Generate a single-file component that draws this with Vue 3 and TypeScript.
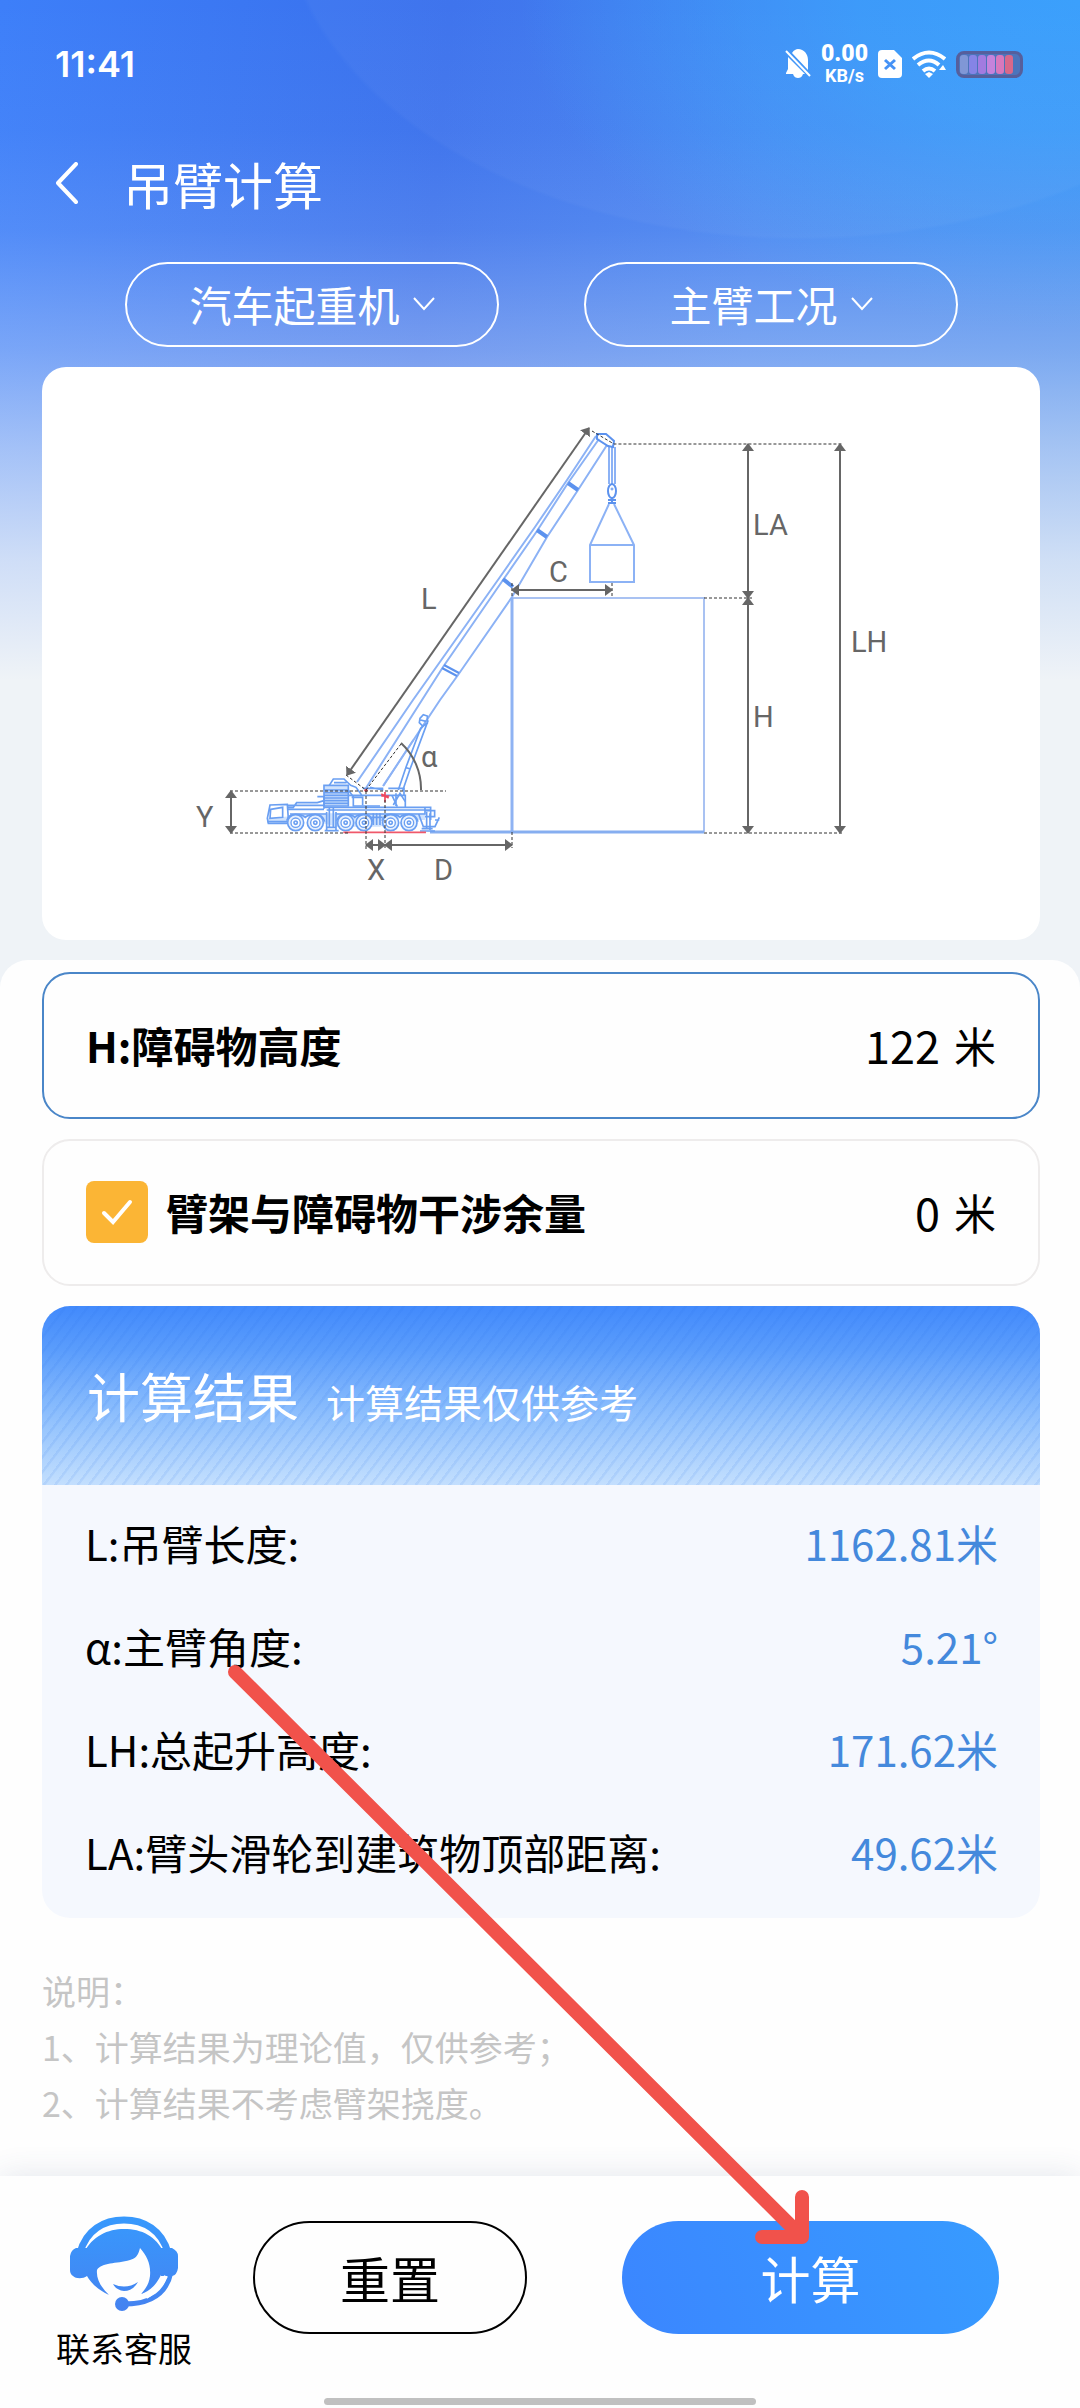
<script setup lang="ts">
import { ref } from 'vue'

interface ResultRow {
  label: string
  value: string
}

const craneTypes: string[] = ['汽车起重机']
const workModes: string[] = ['主臂工况']
const craneType = ref(craneTypes[0])
const workMode = ref(workModes[0])

const obstacleHeight = ref('122')
const clearance = ref('0')
const useClearance = ref(true)

const results: ResultRow[] = [
  { label: 'L:吊臂长度:', value: '1162.81米' },
  { label: 'α:主臂角度:', value: '5.21°' },
  { label: 'LH:总起升高度:', value: '171.62米' },
  { label: 'LA:臂头滑轮到建筑物顶部距离:', value: '49.62米' },
]

const batteryCells: string[] = ['#8097d6', '#8584e6', '#a27be0', '#c583dc', '#d878bd', '#d9688a']
const wheels: number[] = [347, 406, 497, 552, 632, 687]
</script>

<template>
  <div class="page">
    <header class="status">
      <span class="clock">11:41</span>
      <div class="status-icons">
        <svg width="26" height="30" viewBox="0 0 26 30">
          <path d="M7 4 C9 1 11 0 13 0 C19 0 23 5 23 11 V21 Z M3 8 V20 L1 24 V25 H20 Z M8 25 H18 C17 28 15 29 13 29 C11 29 9 28 8 25Z" fill="#fff" />
          <path d="M1 2 L25 27" stroke="#fff" stroke-width="2" />
        </svg>
        <div class="speed"><b>0.00</b><span>KB/s</span></div>
        <svg width="24" height="28" viewBox="0 0 24 28">
          <path d="M4 0 H16 L24 8 V24 Q24 28 20 28 H4 Q0 28 0 24 V4 Q0 0 4 0Z" fill="#fff" />
          <path d="M7 10 L17 19 M17 10 L7 19" stroke="#4592f6" stroke-width="3" />
        </svg>
        <svg width="34" height="28" viewBox="0 0 34 28" fill="none" stroke="#fff" stroke-width="4">
          <path d="M1 9 Q17 -4 33 9" />
          <path d="M6 15 Q17 6 27 15" />
          <path d="M11 21 Q17 16 23 21" />
          <path d="M13 24 L17 22 L21 24 L17 28Z" fill="#fff" stroke="none" />
          <path d="M27 20 L31 15 L34 20Z" fill="#fff" stroke="none" />
        </svg>
        <div class="battery">
          <i v-for="c in batteryCells" :key="c" :style="{ background: c }"></i>
        </div>
      </div>
    </header>

    <div class="titlebar">
      <button class="back" type="button" aria-label="返回">
        <svg width="22" height="42" viewBox="0 0 22 42" fill="none" stroke="#fff" stroke-width="4" stroke-linecap="round" stroke-linejoin="round">
          <path d="M20 2 L2 21 L20 40" />
        </svg>
      </button>
      <h1>吊臂计算</h1>
    </div>

    <div class="filters">
      <label class="pill">
        <select v-model="craneType" aria-label="起重机类型">
          <option v-for="t in craneTypes" :key="t">{{ t }}</option>
        </select>
        <svg width="22" height="14" viewBox="0 0 22 14" fill="none" stroke="#fff" stroke-width="2"><path d="M1 1 L11 12 L21 1" /></svg>
      </label>
      <label class="pill">
        <select v-model="workMode" aria-label="工况">
          <option v-for="m in workModes" :key="m">{{ m }}</option>
        </select>
        <svg width="22" height="14" viewBox="0 0 22 14" fill="none" stroke="#fff" stroke-width="2"><path d="M1 1 L11 12 L21 1" /></svg>
      </label>
    </div>

    <section class="diagram">
      <svg viewBox="42 367 998 573" fill="none">
        <defs>
          <marker id="arrow" viewBox="0 0 8 12" refX="7" refY="6" markerWidth="8" markerHeight="12" markerUnits="userSpaceOnUse" orient="auto-start-reverse">
            <path d="M0 0 L8 6 L0 12Z" fill="#666" />
          </marker>
        </defs>

        <!-- obstacle and ground line -->
        <g stroke="#a9c2f2" stroke-width="2">
          <path d="M512 598 H704 V832" />
          <path d="M512 598 V832" stroke="#8fb3f3" stroke-width="3" />
          <path d="M430 832 H704" stroke="#86aef0" stroke-width="3" />
        </g>

        <!-- boom -->
        <g stroke="#8cb2f5" stroke-width="2">
          <path d="M357 782 L413 700 L500 577 L535 527 L567 480 L596 436" />
          <path d="M366 788 L422 700 L443 667 L503 580 L537 531 L568 483 L599 439" />
          <path d="M383 786 L440 700 L458 675 L512 597 L547 537 L578 490 L607 445" />
          <path d="M609 447 V484 M612 447 V484 M615 447 V484" />
          <path d="M609 504 L590 545 V582 H634 V545 L614 504 M590 545 H634" />
        </g>
        <g stroke="#5c92ee">
          <path d="M503 579 L513 587 M537 530 L547 537 M568 483 L578 490" stroke-width="4" />
          <path d="M444 665 L459 673 M442 668 L457 676" stroke-width="2" />
          <path d="M597 434 H606 L614 441 L613 447 L608 446 L597 439Z" stroke-width="2" />
          <ellipse cx="612" cy="491" rx="4" ry="7" stroke-width="2" />
          <path d="M608 500 H616 M608 503 H616 M612 498 V504" stroke-width="2" />
          <circle cx="612" cy="489" r="1" stroke-width="1" />
        </g>

        <!-- truck body -->
        <g transform="translate(180 680) scale(.3333)" stroke="#6a9ff2" stroke-width="5">
          <path d="M264 425 V415 L432 400 H735 V420 H714 L680 405 L600 440 H470 L430 430 L400 405 L330 430Z" fill="#cfe2fc" stroke="none" />
          <path d="M432 316 H505 V378 H432Z" fill="#cfe2fc" stroke="none" />
          <path d="M262 415 L270 375 L322 373 L326 430 H265Z M272 388 L308 382 V412 L270 415Z" />
          <path d="M322 382 H340 L350 368 H412 L432 362 M322 376 H432 M412 350 H432 V386 M322 388 H432 M330 402 H440 M262 425 H322" />
          <path d="M432 316 H505 V378 H432Z M432 330 H505 M432 338 H505 M432 346 H505 M432 354 H505 M432 362 H505 M432 370 H505" />
          <path d="M448 316 L460 297 H492 L512 316 L528 322 L545 345 M462 308 H500 M505 330 L520 350 V378 H600" />
          <path d="M505 346 H676 V382 M515 352 H548 V376 M548 325 H610 M570 322 L610 330 M625 325 H672 V346" />
          <path d="M432 382 H752 V420 M440 390 H752 M468 402 H735 V382 M735 392 H764 V410 H735 M716 402 L730 440 H765 L778 412 M765 420 H778" />
          <path d="M448 382 V440 M460 382 V440 M440 396 V450 M468 396 V450 M438 442 H470 M434 452 H476 M740 395 V445 M750 400 V450 M725 446 H758 M720 453 H765" />
          <path d="M580 400 V435 M590 400 V435 M600 400 V435 M574 412 H608" />
          <path d="M320 422 Q325 403 347 403 Q366 403 376 412 Q386 403 406 403 Q428 403 434 425 M470 422 Q476 403 497 403 Q516 403 524 412 Q534 403 552 403 Q574 403 578 425 M606 422 Q612 403 632 403 Q652 403 660 412 Q668 403 687 403 Q708 403 714 425" />
          <g v-for="x in wheels" :key="x">
            <circle :cx="x" cy="428" r="24" fill="#e6f0fe" />
            <circle :cx="x" cy="428" r="14" fill="#fff" stroke-width="4" />
            <circle :cx="x" cy="428" r="5" />
          </g>
          <path d="M640 375 L660 340 L676 365 M636 346 L652 380 M648 340 V378" />
          <path d="M655 330 L678 262 L722 145 L742 128 L690 268 L668 332 M676 262 L692 268 M720 115 L730 104 L742 108 V130 L728 138 L718 128Z M722 120 L738 124" />
          <path d="M610 318 L700 180" stroke="#8cb2f5" />
          <path d="M490 457 H738" stroke="#f0586a" />
          <path d="M604 348 H628 M615 336 V366 M604 342 L626 354" stroke="#f0455a" stroke-width="5" />
          <circle cx="558" cy="331" r="5" fill="#f0455a" stroke="none" />
        </g>

        <!-- guide lines -->
        <g stroke="#333" stroke-width="1" stroke-dasharray="3 2">
          <path d="M592 431 L614 444 H842" />
          <path d="M704 598 H753 M704 833 H842" />
          <path d="M512 583 V598 M612 583 V598" />
          <path d="M230 791 H446 M230 833 H350" />
          <path d="M366 791 V850 M385 800 V850 M512 832 V848" />
          <path d="M346 775 L366 790 L401 744" />
        </g>

        <!-- dimensions -->
        <g stroke="#666" stroke-width="2">
          <path d="M347 775 L589 428" marker-start="url(#arrow)" marker-end="url(#arrow)" />
          <path d="M512 590 H612" marker-start="url(#arrow)" marker-end="url(#arrow)" />
          <path d="M748 444 V598" marker-start="url(#arrow)" marker-end="url(#arrow)" />
          <path d="M748 598 V833" marker-start="url(#arrow)" marker-end="url(#arrow)" />
          <path d="M840 444 V833" marker-start="url(#arrow)" marker-end="url(#arrow)" />
          <path d="M231 791 V833" marker-start="url(#arrow)" marker-end="url(#arrow)" />
          <path d="M366 845 H385" marker-start="url(#arrow)" marker-end="url(#arrow)" />
          <path d="M385 845 H512" marker-start="url(#arrow)" marker-end="url(#arrow)" />
        </g>
        <path d="M401 743 A62 62 0 0 1 421 790" stroke="#666" stroke-width="2" />

        <g class="dim">
          <text x="421" y="609">L</text>
          <text x="549" y="582">C</text>
          <text x="753" y="535">LA</text>
          <text x="851" y="652">LH</text>
          <text x="753" y="727">H</text>
          <text x="421" y="767">α</text>
          <text x="196" y="827">Y</text>
          <text x="367" y="880">X</text>
          <text x="434" y="880">D</text>
        </g>
      </svg>
    </section>

    <main class="sheet">
      <div class="field active">
        <label for="height" class="name">H:障碍物高度</label>
        <input id="height" v-model="obstacleHeight" class="num" type="text" inputmode="decimal" />
        <span class="unit">米</span>
      </div>

      <div class="field">
        <label class="name check">
          <span class="tick">
            <input v-model="useClearance" type="checkbox" />
            <svg viewBox="0 0 62 62" fill="none"><path d="M18 32 L27 41 L44 21" stroke="#fff" stroke-width="4" stroke-linecap="round" /></svg>
          </span>
          臂架与障碍物干涉余量
        </label>
        <input v-model="clearance" class="num" type="text" inputmode="decimal" aria-label="臂架与障碍物干涉余量" />
        <span class="unit">米</span>
      </div>

      <section class="result">
        <div class="result-head">
          <h2>计算结果</h2>
          <span>计算结果仅供参考</span>
        </div>
        <dl>
          <div v-for="row in results" :key="row.label" class="row">
            <dt>{{ row.label }}</dt>
            <dd>{{ row.value }}</dd>
          </div>
        </dl>
      </section>

      <div class="notes">
        <p>说明：</p>
        <p>1、计算结果为理论值，仅供参考；</p>
        <p>2、计算结果不考虑臂架挠度。</p>
      </div>
    </main>

    <footer class="footer">
      <a class="service" href="#">
        <svg width="108" height="96" viewBox="0 0 108 96">
          <defs>
            <linearGradient id="svc" x1="0" y1="0" x2="0" y2="96" gradientUnits="userSpaceOnUse">
              <stop offset="0" stop-color="#3799fd" />
              <stop offset="1" stop-color="#4582f0" />
            </linearGradient>
          </defs>
          <path d="M10 37 C16 14 34 4 54 4 C74 4 92 14 98 37" fill="none" stroke="url(#svc)" stroke-width="7" />
          <path d="M14 37 C22 20 38 13 54 13 C72 13 86 20 94 37 L93 54 C88 68 80 75 71 78 C76 72 79 68 80 60 C81 48 77 40 70 32 C68 40 66 42 60 44 C46 48 32 46 27 54 C26 64 32 72 39 79 C28 74 20 66 17 60 Z" fill="url(#svc)" />
          <path d="M6 32 H17 V60 C13 63 6 63 3 60 Q0 58 0 54 V40 Q1 34 6 32Z M91 32 H102 Q108 35 108 40 V52 Q107 59 102 60 H91Z" fill="url(#svc)" />
          <path d="M101 56 C97 76 84 88 54 88" fill="none" stroke="url(#svc)" stroke-width="5" />
          <path d="M96 60 C92 69 86 75 76 81" fill="none" stroke="#fff" stroke-width="4" />
          <circle cx="52" cy="88" r="7" fill="url(#svc)" />
          <path d="M43 68 Q56 74 68 66 Q63 75 54 75 Q46 74 43 68Z" fill="url(#svc)" />
        </svg>
        <span>联系客服</span>
      </a>
      <button class="reset" type="button">重置</button>
      <button class="calc" type="button">计算</button>
      <i class="home-bar"></i>
    </footer>

    <svg class="pointer" width="584" height="582" viewBox="226 1663 584 582" fill="none" stroke="#f1524b" stroke-width="14" stroke-linecap="round" stroke-linejoin="round">
      <path d="M235 1672 L802 2237 M802 2197 V2237 H762" />
    </svg>
  </div>
</template>

<style>
body {
  margin: 0;
  background: #fefefe;
}
</style>

<style scoped>
.page {
  position: relative;
  overflow: hidden;
  font-family: "Noto Sans CJK SC", "Noto Sans", sans-serif;
  color: #000;
  background:
    linear-gradient(180deg, rgba(239, 243, 247, 0) 0, rgba(239, 243, 247, 0.04) 130px, rgba(239, 243, 247, 0.12) 230px, rgba(239, 243, 247, 0.34) 350px, rgba(239, 243, 247, 0.58) 450px, rgba(239, 243, 247, 0.82) 560px, #eff3f7 680px),
    radial-gradient(ellipse 520px 340px at 800px -100px, rgba(255, 255, 255, 0.03) 99%, rgba(255, 255, 255, 0) 100%),
    radial-gradient(ellipse 560px 330px at 100% 0, #359dfc 0, rgba(53, 157, 252, 0.8) 40%, rgba(53, 157, 252, 0) 100%),
    linear-gradient(95deg, #3d7ff9 0, #3970ec 35%, #3f7ef0 60%, #3f86ec 100%);
}

.status {
  display: flex;
  justify-content: space-between;
  align-items: center;
  height: 128px;
  padding: 0 57px 0 55px;
  color: #fff;
}

.clock {
  font-family: Inter, "Noto Sans", sans-serif;
  font-size: 36px;
  font-weight: 600;
}

.status-icons {
  display: flex;
  align-items: center;
  gap: 10px;
}

.speed {
  display: flex;
  flex-direction: column;
  align-items: center;
  font-family: Roboto, "Noto Sans", sans-serif;
  font-size: 18px;
  line-height: 20px;
  font-weight: 700;
}

.speed b {
  font-size: 23px;
  line-height: 24px;
}

.battery {
  box-sizing: border-box;
  display: flex;
  gap: 1px;
  width: 67px;
  height: 27px;
  padding: 1px;
  border: 3px solid #565f9c;
  border-radius: 8px;
  background: #4c74bb;
}

.battery i {
  width: 8px;
  border-radius: 3px;
}

.titlebar {
  display: flex;
  align-items: center;
  gap: 45px;
  height: 110px;
  padding: 0 56px;
  color: #fff;
}

button {
  font-family: inherit;
  cursor: pointer;
}

.back {
  display: flex;
  padding: 0;
  border: 0;
  background: none;
}

h1 {
  margin: 0;
  font-size: 50px;
  font-weight: 400;
}

.filters {
  display: flex;
  gap: 85px;
  padding: 24px 122px 20px 125px;
}

.pill {
  box-sizing: border-box;
  flex: 1;
  display: flex;
  align-items: center;
  justify-content: center;
  gap: 12px;
  height: 85px;
  padding-bottom: 2px;
  border: 2px solid #fff;
  border-radius: 43px;
}

.pill select {
  appearance: none;
  padding: 0;
  border: 0;
  background: none;
  color: #fff;
  font: inherit;
  font-size: 42px;
}

.diagram {
  margin: 0 40px 20px 42px;
  border-radius: 24px;
  background: #fff;
}

.diagram svg {
  display: block;
  width: 100%;
}

.dim text {
  fill: #666;
  font-family: Roboto, "Noto Sans", sans-serif;
  font-size: 29px;
}

.sheet {
  display: flex;
  flex-direction: column;
  gap: 20px;
  padding: 12px 40px 45px 42px;
  border-radius: 28px 28px 0 0;
  background: #fefefe;
}

.field {
  box-sizing: border-box;
  display: flex;
  align-items: center;
  height: 147px;
  padding: 0 42px 2px;
  border: 2px solid #eeecec;
  border-radius: 28px;
  font-size: 42px;
}

.field.active {
  border-color: #4a86c8;
}

.name {
  font-weight: 700;
}

.check {
  display: flex;
  align-items: center;
  gap: 18px;
}

.tick {
  position: relative;
  width: 62px;
  height: 62px;
}

.tick input {
  appearance: none;
  display: block;
  width: 62px;
  height: 62px;
  margin: 0;
  border-radius: 8px;
  background: #fbb535;
}

.tick svg {
  position: absolute;
  inset: 0;
  pointer-events: none;
}

.num {
  flex: 1;
  min-width: 0;
  padding: 0;
  margin-right: 14px;
  border: 0;
  outline: 0;
  background: none;
  color: #000;
  font-family: inherit;
  font-size: 45px;
  text-align: right;
}

.result {
  overflow: hidden;
  border-radius: 28px;
  background: #f5f8fe;
}

.result-head {
  display: flex;
  align-items: baseline;
  gap: 27px;
  box-sizing: border-box;
  height: 179px;
  padding: 51px 45px 0;
  color: #fff;
  background:
    repeating-linear-gradient(127deg, rgba(40, 110, 230, 0.1) 0, rgba(40, 110, 230, 0.1) 2px, rgba(255, 255, 255, 0) 3px, rgba(255, 255, 255, 0) 9px),
    linear-gradient(180deg, #428afc 0, #5b9dfc 25%, #8fc0fd 62%, #c3dffe 100%);
}

.result-head h2 {
  margin: 0;
  font-size: 53px;
  font-weight: 400;
}

.result-head span {
  font-size: 39px;
}

dl {
  margin: 0;
  padding: 6px 42px 15px 43px;
}

.row {
  display: flex;
  justify-content: space-between;
  font-size: 42px;
  line-height: 103px;
}

dd {
  margin: 0;
  color: #4489dc;
}

.notes {
  padding-top: 25px;
  font-size: 34px;
  line-height: 56px;
  color: #c5c5c5;
}

.notes p {
  margin: 0;
}

.footer {
  position: relative;
  box-sizing: border-box;
  display: flex;
  align-items: flex-start;
  height: 232px;
  padding: 0 81px 0 56px;
  background: #fefefe;
  box-shadow: 0 0 30px rgba(60, 80, 120, 0.14);
}

.service {
  display: flex;
  flex-direction: column;
  align-items: center;
  margin: 40px 61px 0 0;
  color: #000;
  font-size: 34px;
  line-height: 50px;
  text-decoration: none;
}

.service span {
  margin-top: 11px;
}

.reset,
.calc {
  box-sizing: border-box;
  flex: 270 0 0;
  height: 113px;
  margin-top: 45px;
  padding: 0 0 2px;
  border: 2px solid #000;
  border-radius: 57px;
  background: #fefefe;
  color: #000;
  font-size: 50px;
}

.calc {
  flex-grow: 373;
  margin-left: 95px;
  border-color: transparent;
  background: linear-gradient(70deg, #3b86ff, #379bff) border-box;
  color: #fff;
}

.home-bar {
  position: absolute;
  bottom: 3px;
  left: 30%;
  width: 40%;
  height: 7px;
  border-radius: 4px;
  background: #c0c0c0;
}

.pointer {
  position: absolute;
  left: 226px;
  top: 1663px;
  pointer-events: none;
}
</style>
